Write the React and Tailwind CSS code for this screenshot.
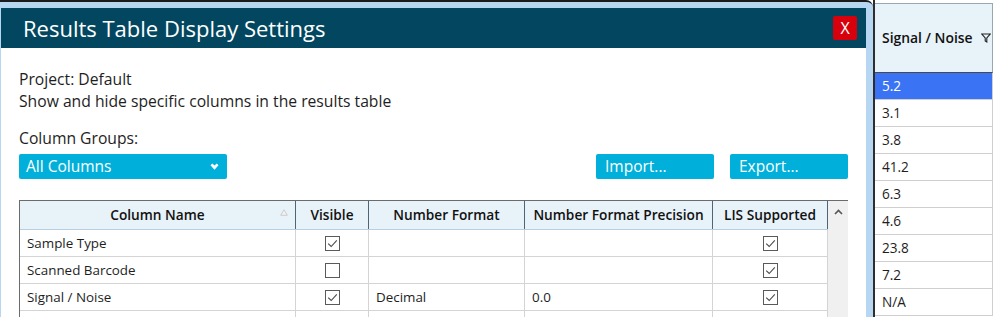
const FONT = { fontFamily: '"Open Sans", "Noto Sans", sans-serif' };

const COLS = [
  { key: 'name', label: 'Column Name', w: 'w-[276px]' },
  { key: 'visible', label: 'Visible', w: 'w-[73px]' },
  { key: 'format', label: 'Number Format', w: 'w-[156px]' },
  { key: 'precision', label: 'Number Format Precision', w: 'w-[188px]' },
  { key: 'lis', label: 'LIS Supported', w: 'w-[115px]' },
];

const ROWS = [
  { name: 'Sample Type', visible: true, format: '', precision: '', lis: true },
  { name: 'Scanned Barcode', visible: false, format: '', precision: '', lis: true },
  { name: 'Signal / Noise', visible: true, format: 'Decimal', precision: '0.0', lis: true },
  { name: '', visible: null, format: '', precision: '', lis: null },
];

const SIGNALS = ['5.2', '3.1', '3.8', '41.2', '6.3', '4.6', '23.8', '7.2', 'N/A'];

function Check({ checked }) {
  return (
    <div className="w-[15px] h-[15px] border border-[#5a5a5a] bg-white flex items-center justify-center">
      {checked && (
        <svg width="13" height="13" viewBox="0 0 13 13">
          <path d="M2.2 6.6 L5.2 9.5 L10.8 3.4" fill="none" stroke="#4a4a4a" strokeWidth="1.1" />
        </svg>
      )}
    </div>
  );
}

function Cell({ col, row }) {
  const v = row[col.key];
  if (col.key === 'visible' || col.key === 'lis') {
    return (
      <div className={`${col.w} h-full flex items-center justify-center border-r border-[#d4d4d4]`}>
        {v !== null && <Check checked={v} />}
      </div>
    );
  }
  return (
    <div className={`${col.w} h-full flex items-center px-[7px] border-r border-[#d4d4d4] text-[13.4px] text-[#1e1e1e]`}>
      {v}
    </div>
  );
}

export default function App() {
  return (
    <div className="w-[995px] h-[317px] flex overflow-hidden bg-white" style={FONT}>
      {/* Dialog */}
      <div className="w-[873px] h-full flex flex-col border-t-2 border-[#1b1b1b] rounded-tr-[7px] bg-[#b7d6f2] pt-[6px] pl-[1px] pr-[7px]">
        <div className="shrink-0 h-[40px] bg-[#02475f] flex items-center justify-between pl-[22px] pr-[9px]">
          <span className="text-white text-[22px] leading-none">Results Table Display Settings</span>
          <div className="w-[24px] h-[24px] bg-[#d8000c] rounded-[2px] flex items-center justify-center text-white text-[16px] leading-none">
            X
          </div>
        </div>
        <div className="flex-1 min-h-0 overflow-hidden bg-white px-[18px] pt-[20px]">
          <div className="text-[15.7px] leading-[22px] text-[#1e1e1e]">Project: Default</div>
          <div className="text-[15.7px] leading-[22px] text-[#1e1e1e]">Show and hide specific columns in the results table</div>
          <div className="text-[15.7px] leading-[22px] text-[#1e1e1e] mt-[15px]">Column Groups:</div>
          <div className="mt-[5px] flex justify-between items-center">
            <div className="w-[208px] h-[25px] bg-[#00b0da] rounded-[2px] flex items-center justify-between pl-[7px] pr-[8px] text-white text-[15.5px]">
              <span>All Columns</span>
              <svg width="9" height="8" viewBox="0 0 9 8">
                <path d="M0.5 2.2 L2.3 0.5 L4.5 2.6 L6.7 0.5 L8.5 2.2 L4.5 6.8 Z" fill="white" />
              </svg>
            </div>
            <div className="flex gap-4">
              <div className="w-[118px] h-[25px] bg-[#00b0da] rounded-[2px] flex items-center pl-[9px] text-white text-[15.5px]">Import...</div>
              <div className="w-[118px] h-[25px] bg-[#00b0da] rounded-[2px] flex items-center pl-[9px] text-white text-[15.5px]">Export...</div>
            </div>
          </div>
          {/* Table */}
          <div className="mt-[21px] flex border-t border-l border-[#6b6b6b]">
            <div className="flex flex-col">
              <div className="flex h-[29px] bg-[#e8f2f9] border-b border-[#b8cfe0]">
                {COLS.map((c) => (
                  <div
                    key={c.key}
                    className={`${c.w} h-full relative flex items-center justify-center border-r border-[#4f6575] text-[13.7px] font-semibold text-[#111]`}
                  >
                    {c.label}
                    {c.key === 'name' && (
                      <svg className="absolute right-[7px] top-[8px]" width="8" height="7" viewBox="0 0 8 7">
                        <path d="M4 0.8 L7.3 6.3 L0.7 6.3 Z" fill="#f2f2f2" stroke="#c4c4c4" strokeWidth="0.8" />
                      </svg>
                    )}
                  </div>
                ))}
              </div>
              {ROWS.map((r, i) => (
                <div key={i} className="flex h-[27px] border-b border-[#d4d4d4]">
                  {COLS.map((c) => (
                    <Cell key={c.key} col={c} row={r} />
                  ))}
                </div>
              ))}
            </div>
            <div className="w-[21px] bg-[#f0f0f0] flex justify-center pt-[8px]">
              <svg width="9" height="6" viewBox="0 0 9 6">
                <path d="M1 5 L4.5 1.5 L8 5" fill="none" stroke="#555" strokeWidth="1.6" />
              </svg>
            </div>
          </div>
        </div>
      </div>

      {/* Right results column */}
      <div className="w-[122px] h-full flex flex-col border-l-2 border-[#2e2e2e] pt-[3px] bg-white">
        <div className="shrink-0 w-[118px] h-[70px] bg-[#e8f2f9] border-t border-r border-[#9aa6b0] border-b-[#4a4a4a] border-b flex items-center pl-[7px] gap-[8px] text-[13.9px] font-semibold text-[#111]">
          <span>Signal / Noise</span>
          <svg width="10" height="10" viewBox="0 0 10 10">
            <path d="M0.8 1 L9.2 1 L5.8 5 L5.8 9 L4.2 8 L4.2 5 Z" fill="none" stroke="#222" strokeWidth="1.1" />
          </svg>
        </div>
        {SIGNALS.map((s, i) => (
          <div
            key={s}
            className={`shrink-0 w-[118px] h-[27px] flex items-center pl-[7px] text-[13.6px] border-r border-b border-[#cfcfcf] ${
              i === 0 ? 'bg-[#3a73f3] text-white' : 'bg-white text-[#1e1e1e]'
            }`}
          >
            {s}
          </div>
        ))}
      </div>
    </div>
  );
}
